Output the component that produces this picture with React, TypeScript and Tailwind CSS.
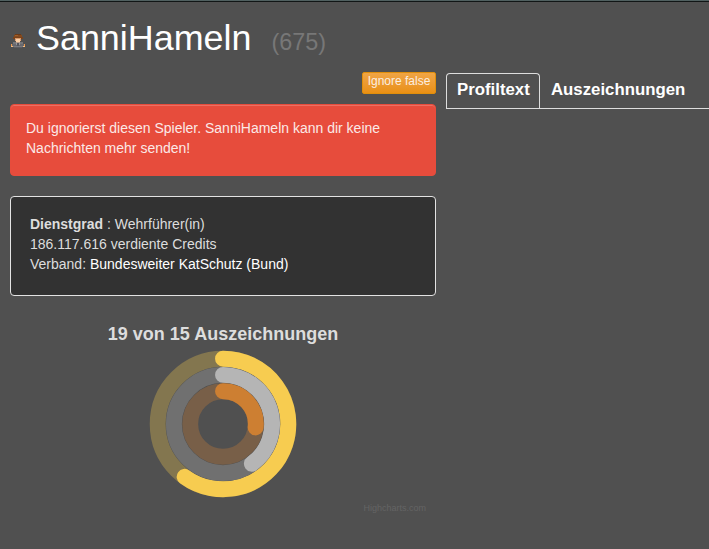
import React from "react";

const CENTER = 74;

const rings = [
  { radius: 65.3, share: 0.6, track: "#83764f", color: "#f7cc50" },
  { radius: 49.1, share: 0.4, track: "#707070", color: "#b5b5b5" },
  { radius: 32.8, share: 4 / 15, track: "#785f48", color: "#cd7f32" },
];

const pixels: [number, number, number, number, string][] = [
  [4, 0, 6, 1, "#6b3a17"],
  [3, 1, 8, 2, "#84491d"],
  [4, 1, 3, 1, "#a05c28"],
  [2, 3, 10, 2, "#7a431b"],
  [4, 4, 6, 2, "#d9986a"],
  [5, 5, 4, 3, "#fad0a8"],
  [4, 6, 1, 1, "#e9a878"],
  [9, 6, 1, 1, "#e9a878"],
  [2, 8, 10, 3, "#77777a"],
  [5, 8, 4, 1, "#b59a88"],
  [1, 10, 12, 2, "#68686d"],
  [5, 9, 1, 2, "#96969a"],
  [8, 9, 1, 2, "#96969a"],
  [6, 9, 2, 3, "#55555c"],
  [2, 12, 10, 1, "#7b7b80"],
  [3, 13, 8, 1, "#5c5c60"],
  [0, 10, 1, 2, "#f2994a"],
  [0, 12, 2, 1, "#f6bd80"],
  [13, 10, 1, 2, "#f2994a"],
  [12, 12, 2, 1, "#f6bd80"],
];

function Avatar() {
  return (
    <svg
      className="mt-[32px] ml-px h-[14px] w-[14px] shrink-0"
      viewBox="0 0 14 14"
      shapeRendering="crispEdges"
    >
      {pixels.map(([x, y, w, h, fill], i) => (
        <rect key={i} x={x} y={y} width={w} height={h} fill={fill} />
      ))}
    </svg>
  );
}

function AwardsChart() {
  return (
    <svg className="mx-auto mt-[5px] block h-[148px] w-[148px]" viewBox="0 0 148 148">
      {rings.map((r) => {
        const angle = r.share * 2 * Math.PI;
        const x = CENTER + r.radius * Math.sin(angle);
        const y = CENTER - r.radius * Math.cos(angle);
        const large = r.share > 0.5 ? 1 : 0;
        return (
          <g key={r.color} fill="none">
            <circle cx={CENTER} cy={CENTER} r={r.radius} stroke={r.track} strokeWidth="15.9" />
            <path
              d={`M${CENTER} ${CENTER - r.radius}A${r.radius} ${r.radius} 0 ${large} 1 ${x} ${y}`}
              stroke={r.color}
              strokeWidth="15.9"
              strokeLinecap="round"
            />
          </g>
        );
      })}
    </svg>
  );
}

export default function App() {
  return (
    <div className="h-[549px] w-[709px] overflow-hidden bg-[#505050] font-['Liberation_Sans',Arial,sans-serif] text-[14px] leading-5 text-[#dddddd]">
      <div className="h-[2px] border-b border-[#111616] bg-[#506060]" />
      <h1 className="flex h-[69px] items-start pl-[10px] text-white">
        <Avatar />
        <span className="mt-[16px] ml-[11px] text-[35.9px] leading-[40px]">SanniHameln</span>
        <small className="mt-[20px] ml-[20px] text-[23.4px] leading-[40px] text-[#777777]">(675)</small>
      </h1>

      <div className="flex gap-[10px] pl-[10px]">
        <div className="w-[426px] shrink-0">
          <div className="flex h-[33px] justify-end pt-px">
            <button className="h-[22px] w-[74px] rounded-[2px] border border-[#e08e0b] bg-gradient-to-b from-[#f0a544] to-[#e99013] pb-[4px] text-[12px] leading-[16px] whitespace-nowrap text-[#fbeee0]">
              Ignore false
            </button>
          </div>
          <div className="h-[72px] rounded-[4px] border border-[#e74c3c] bg-[#e74c3c] px-[15px] pt-[13px] text-[#fbe9e7] shadow-[inset_0_1px_0_rgba(255,255,255,0.2)]">
            Du ignorierst diesen Spieler. SanniHameln kann dir keine Nachrichten mehr senden!
          </div>
          <div className="mt-5 h-[100px] rounded-[4px] border border-[#e3e3e3] bg-[#323232] px-[19px] pt-[17px]">
            <p>
              <strong>Dienstgrad</strong> : Wehrführer(in)
            </p>
            <p>186.117.616 verdiente Credits</p>
            <p>
              Verband: <a className="text-white">Bundesweiter KatSchutz (Bund)</a>
            </p>
          </div>
          <h2 className="mt-[28px] text-center text-[18px] leading-[21px] font-bold">
            19 von 15 Auszeichnungen
          </h2>
          <AwardsChart />
          <p className="mt-[4px] pr-[10px] text-right text-[9px] leading-[12px] text-[#646464]">Highcharts.com</p>
        </div>

        <nav className="mt-[2px] flex h-[36px] min-w-0 grow border-b border-[#dddddd] text-[16.8px] leading-[20px] font-bold text-white">
          <a className="h-[36px] w-[94px] shrink-0 rounded-t-[4px] border border-b-0 border-[#dddddd] pt-[6px] pl-[10px]">
            Profiltext
          </a>
          <a className="pt-[7px] pl-[11px]">Auszeichnungen</a>
        </nav>
      </div>
    </div>
  );
}
